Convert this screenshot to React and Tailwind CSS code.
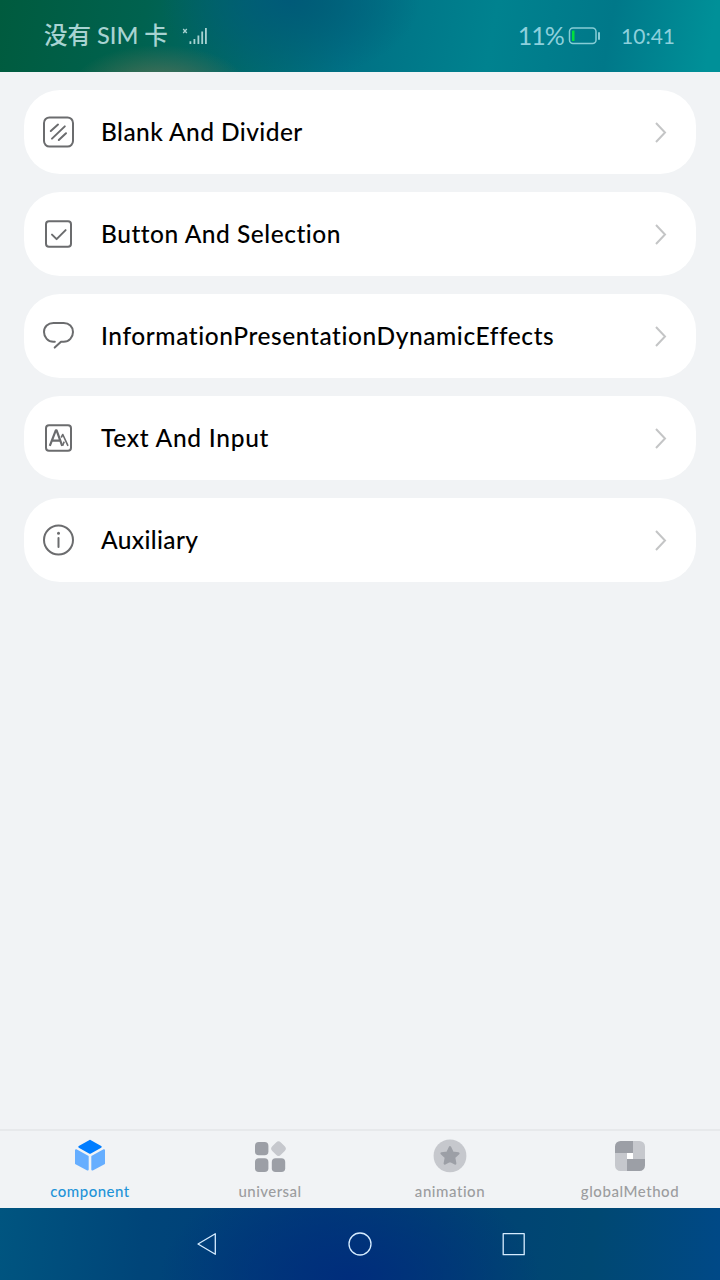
const stroke = { fill: "none", stroke: "#6b6c6e", strokeWidth: 2, strokeLinecap: "round", strokeLinejoin: "round" };

function DividerIcon() {
  return (
    <svg className="size-9" viewBox="0 0 36 36" {...stroke}>
      <rect x="4" y="3.4" width="29" height="29.2" rx="5.5" />
      <path d="M10.800 17 18 10.600M12 24.600 24.800 12.400M18.800 26 26 19.200" />
    </svg>
  );
}

function CheckIcon() {
  return (
    <svg className="size-9" viewBox="0 0 36 36" {...stroke}>
      <rect x="6" y="5.200" width="25" height="25.600" rx="3" />
      <path d="m12 18.600 4.600 4.500 9-9" />
    </svg>
  );
}

function BubbleIcon() {
  return (
    <svg className="size-9" viewBox="0 0 36 36" {...stroke}>
      <path d="M14.800 23.700H13.400C8 23.700 4 19.300 4 14S8 5 13.400 5H23.700c5.400 0 9.300 3.700 9.300 9s-3.900 9.700-9.300 9.700H21L14.700 29.600" />
    </svg>
  );
}

function FontIcon() {
  return (
    <svg className="size-9" viewBox="0 0 36 36" {...stroke}>
      <rect x="6" y="5.200" width="25" height="25.600" rx="3" />
      <path strokeWidth="2.200" strokeLinecap="butt" d="m9.800 25.800 6-15.400h.8l5.600 15.400M11.800 20.600h8" />
      <path strokeWidth="1.600" strokeLinecap="butt" d="m21.200 17.500 1.600-3 5.200 11.300M22.600 25.800l1.600-4.200" />
    </svg>
  );
}

function InfoIcon() {
  return (
    <svg className="size-9" viewBox="0 0 36 36" {...stroke}>
      <circle cx="18.500" cy="18" r="14.500" />
      <path d="M18.500 16v9" />
      <circle cx="18.500" cy="11.300" r="1.500" fill="#6b6c6e" stroke="none" />
    </svg>
  );
}

const items = [
  { label: "Blank And Divider", Icon: DividerIcon, tracking: "tracking-[0.42px]" },
  { label: "Button And Selection", Icon: CheckIcon, tracking: "tracking-[0.52px]" },
  { label: "InformationPresentationDynamicEffects", Icon: BubbleIcon, tracking: "tracking-[0.57px]" },
  { label: "Text And Input", Icon: FontIcon, tracking: "tracking-[0.72px]" },
  { label: "Auxiliary", Icon: InfoIcon, tracking: "tracking-[0.35px]" },
];

function CubeIcon() {
  return (
    <svg className="size-9" viewBox="0 0 36 36" strokeLinejoin="round" strokeWidth="2">
      <path fill="#007dff" stroke="#007dff" d="M18 2.800 28.700 8.800 18 14.800 7.300 8.800Z" />
      <path fill="#66aeff" stroke="#66aeff" d="M4 12.200 15.700 18.600v13L4 25.400ZM32 12.200 20.300 18.600v13L32 25.400Z" />
    </svg>
  );
}

function GridIcon() {
  return (
    <svg className="size-9" viewBox="0 0 36 36" fill="#9c9fa6">
      <rect x="3" y="4" width="13.400" height="13.200" rx="3.800" />
      <rect x="3" y="20.200" width="13.400" height="13.800" rx="3.800" />
      <rect x="19.800" y="20.200" width="13.400" height="13.800" rx="3.800" />
      <rect x="20.400" y="4.500" width="12.200" height="12.200" rx="3.400" fill="#c6c8cd" transform="rotate(45 26.500 10.600)" />
    </svg>
  );
}

function StarIcon() {
  return (
    <svg className="size-9" viewBox="0 0 36 36">
      <circle cx="18" cy="17.900" r="16.400" fill="#c6c8cd" />
      <path
        fill="#9c9fa6"
        stroke="#9c9fa6"
        strokeWidth="2.400"
        strokeLinejoin="round"
        d="m18 9.300 2.500 5.300 5.900.8-4.300 4.100 1.100 6L18 22.700l-5.200 2.800 1.100-6-4.300-4.100 5.900-.8Z"
      />
    </svg>
  );
}

function PinwheelIcon() {
  return (
    <svg className="size-9" viewBox="0 0 36 36">
      <path fill="#c6c8cd" d="M21 3h6.500a5.500 5.500 0 0 1 5.500 5.500V21H21ZM3 15h12v18H8.500A5.500 5.500 0 0 1 3 27.500Z" />
      <path fill="#9c9fa6" d="M8.500 3H21v12H3V8.500A5.500 5.500 0 0 1 8.500 3ZM15 21h18v6.500a5.500 5.500 0 0 1-5.500 5.500H15Z" />
      <rect x="15" y="15" width="6" height="6" fill="#fff" />
    </svg>
  );
}

const tabs = [
  { label: "component", Icon: CubeIcon, color: "text-[#1f93d8]", tracking: "tracking-[0.5px]" },
  { label: "universal", Icon: GridIcon, color: "text-[#9c9d9f]", tracking: "tracking-[0.45px]" },
  { label: "animation", Icon: StarIcon, color: "text-[#9c9d9f]", tracking: "tracking-[0.55px]" },
  { label: "globalMethod", Icon: PinwheelIcon, color: "text-[#9c9d9f]", tracking: "tracking-[0.55px]" },
];

function StatusBar() {
  return (
    <header className="flex h-[72px] items-center bg-[radial-gradient(ellipse_90px_45px_at_160px_90px,#5a7258,transparent),radial-gradient(ellipse_130px_80px_at_290px_0px,#005a78,transparent),linear-gradient(100deg,#005b3e_0%,#00624f_20%,#00686a_34%,#007084_48%,#00828f_68%,#007889_84%,#009098_98%)] pr-[45px] pl-11 text-[#a8d3d2]">
      <span className="text-[23.5px] font-medium whitespace-pre">没有 SIM 卡</span>
      <svg className="ml-[14px] h-6 w-7" viewBox="0 0 28 24" fill="#a8d3d2">
        <path d="m1.200 5 3.600 4m0-4-3.600 4" stroke="#a8d3d2" strokeWidth="1.300" />
        <path d="M7.500 17.200h1.800V20H7.500ZM11.500 15h1.800v5h-1.800ZM15.500 11.500h1.800V20h-1.800ZM19.300 7.500h1.800V20h-1.800ZM23 4h1.800v16H23Z" />
      </svg>
      <span className="ml-auto text-[25px] tracking-[-0.9px] text-[#8dd0dc]">11%</span>
      <svg className="ml-[4px] h-[18px] w-8" viewBox="0 0 32 18">
        <rect x="1.500" y="1" width="26.500" height="15.500" rx="3.500" fill="none" stroke="#86cdd6" strokeWidth="1.500" />
        <path d="M4 4q0-.5.800-.5h1.700v10.500H4.800q-.8 0-.8-.5Z" fill="#00e03c" />
        <rect x="30" y="5" width="2" height="8" rx="1" fill="#86cdd6" />
      </svg>
      <span className="ml-[21px] text-[21px] text-[#8dd0dc]">10:41</span>
    </header>
  );
}

function NavBar() {
  return (
    <footer className="h-[72px] bg-[radial-gradient(ellipse_190px_110px_at_350px_70px,#002d7c,transparent),linear-gradient(95deg,#005580_0%,#004579_20%,#003c78_45%,#004174_60%,#004872_82%,#004987_100%)]">
      <svg className="h-[72px] w-[720px]" viewBox="0 0 720 72" fill="none" stroke="#d5ecff" strokeWidth="1.300" strokeLinejoin="round">
        <path d="M198 36 215.300 25.800V46.300Z" />
        <circle cx="360" cy="36" r="11" />
        <rect x="503.200" y="25.700" width="21" height="21" />
      </svg>
    </footer>
  );
}

export default function App() {
  return (
    <div className="flex h-[1280px] w-[720px] flex-col overflow-hidden bg-[#f1f3f5] font-['Lato','Noto_Sans_CJK_SC',sans-serif]">
      <StatusBar />
      <main className="flex flex-1 flex-col gap-[18px] px-6 pt-[18px]">
        {items.map(({ label, Icon, tracking }) => (
          <div key={label} className="flex h-[84px] items-center rounded-[36px] bg-white pr-7 pl-4">
            <Icon />
            <span className={`ml-[25px] pb-px text-[24.5px] leading-8 font-medium whitespace-nowrap text-black ${tracking}`}>{label}</span>
            <svg className="ml-auto h-6 w-4" viewBox="0 0 16 24" fill="none" stroke="#c4c5c6" strokeWidth="2">
              <path d="m4 3 9 9.500L4 22" />
            </svg>
          </div>
        ))}
      </main>
      <nav className="grid h-[79px] grid-cols-4 border-t-2 border-[#e7e9eb]">
        {tabs.map(({ label, Icon, color, tracking }) => (
          <div key={label} className="flex flex-col items-center pt-[7px]">
            <Icon />
            <span className={`mt-[7px] text-[15px] leading-5 font-medium ${color} ${tracking}`}>{label}</span>
          </div>
        ))}
      </nav>
      <NavBar />
    </div>
  );
}
